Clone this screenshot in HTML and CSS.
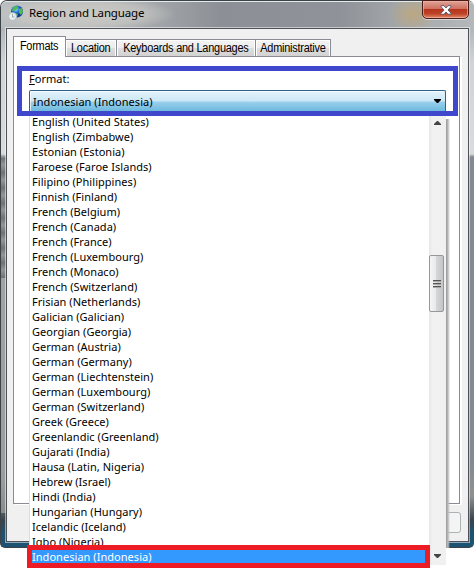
FILE: index.html
```html
<!DOCTYPE html>
<html lang="en">
<head>
<meta charset="utf-8">
<title>Region and Language</title>
<link rel="stylesheet" href="styles.css">
</head>
<body>
<div class="window">
  <header class="titlebar">
    <svg class="globe" width="16" height="16" viewBox="0 0 16 16">
      <defs><radialGradient id="g" cx=".4" cy=".3"><stop offset="0" stop-color="#a9e2ff"/><stop offset=".55" stop-color="#2479d8"/><stop offset="1" stop-color="#123a9a"/></radialGradient></defs>
      <circle cx="9" cy="6.500" r="6" fill="url(#g)"/>
      <path d="M5 2.500Q8 0 10 1.500L9 4 6 6 4 6ZM11 4l3-1 1 4-2 3-2-2ZM7 8l3 1-1 3-2-1Z" fill="#52b848"/>
      <circle cx="4.500" cy="11.500" r="4" fill="#e9eff1" stroke="#a3b3ba" stroke-width=".8"/>
      <path d="M4.500 9v3h2" fill="none" stroke="#8d9a9f" stroke-width=".8"/>
    </svg>
    <h1 class="title">Region and Language</h1>
    <button class="close" aria-label="Close"><svg width="12" height="10" viewBox="0 0 12 10"><path d="M1 .7h3L6 3 8 .7h3v1L8 5l3 3.200v1H8L6 7 4 9.300H1v-1L4 5 1 1.700Z" fill="#fff" stroke="#525667" stroke-width=".9"/></svg></button>
  </header>
  <main class="client">
    <nav class="tabs">
      <a class="tab active"><span>Formats</span></a><a class="tab location"><span>Location</span></a><a class="tab keyboards"><span>Keyboards and Languages</span></a><a class="tab admin"><span>Administrative</span></a>
    </nav>
    <section class="panel">
      <div class="field">
        <label class="label"><u>F</u>ormat:</label>
        <div class="select"><span>Indonesian (Indonesia)</span><svg width="7" height="4"><path d="M0 0h7v1L4 4H3L0 1Z" fill="#000"/></svg></div>
      </div>
    </section>
    <div class="actions"><div class="apply"></div></div>
  </main>
  <div class="dropdown">
    <ul class="list">
      <li>English (United States)</li><li>English (Zimbabwe)</li><li>Estonian (Estonia)</li><li>Faroese (Faroe Islands)</li><li>Filipino (Philippines)</li><li>Finnish (Finland)</li><li>French (Belgium)</li><li>French (Canada)</li><li>French (France)</li><li>French (Luxembourg)</li><li>French (Monaco)</li><li>French (Switzerland)</li><li>Frisian (Netherlands)</li><li>Galician (Galician)</li><li>Georgian (Georgia)</li><li>German (Austria)</li><li>German (Germany)</li><li>German (Liechtenstein)</li><li>German (Luxembourg)</li><li>German (Switzerland)</li><li>Greek (Greece)</li><li>Greenlandic (Greenland)</li><li>Gujarati (India)</li><li>Hausa (Latin, Nigeria)</li><li>Hebrew (Israel)</li><li>Hindi (India)</li><li>Hungarian (Hungary)</li><li>Icelandic (Iceland)</li><li>Igbo (Nigeria)</li>
    </ul>
    <div class="scrollbar">
      <svg class="up" width="7" height="4"><path d="M3 0h1l3 3v1H0V3Z" fill="#444"/></svg>
      <div class="thumb"><i></i><i></i><i></i></div>
      <svg class="down" width="7" height="4"><path d="M0 0h7v1L4 4H3L0 1Z" fill="#444"/></svg>
    </div>
  </div>
  <div class="selected">Indonesian (Indonesia)</div>
</div>
</body>
</html>
```
FILE: styles.css
```css
* { box-sizing: border-box; }
body { margin: 0; width: 474px; height: 568px; overflow: hidden; background: #fff; font: 11px/15px "Noto Sans", sans-serif; color: #000; letter-spacing: 0.04px; }
.window { position: relative; width: 474px; height: 548px; padding: 0 5px 6px 5px; border: solid #3b4248; border-width: 1px 0 1px 1px; border-radius: 7px 7px 5px 5px;
  background:
    repeating-linear-gradient(#6f7271 0, #929594 7px, #6f7271 15px) 0 157px / 5px 120px no-repeat,
    linear-gradient(#a0a3a2, #9a9d9b 200px, #8a8c8a) 0 277px / 5px 235px no-repeat,
    linear-gradient(#b9bcc0 0, #b4b7ba 28px, #d0d2d4 60px, #d9dbdc 153px, #848a92 156px, #848a92 460px, #909090 495px, #39444d 519px, #1d5273 532px, #1d5273); }
.titlebar { display: flex; height: 27px; margin: 0 -5px; padding-left: 7px; align-items: flex-start; border-top: 1px solid #e4e9e9; border-radius: 6px 6px 0 0;
  background: radial-gradient(ellipse 95px 18px at 80px 12px, #cbcac6 0, #cbcac6aa 65%, transparent), radial-gradient(ellipse 24px 18px at 412px 12px, #bba780, transparent), linear-gradient(90deg, #b9bdbf, #a7aaad 140px, #8c9096 220px, #8f9399 340px, #a4a7aa 400px, #b5b8ba); }
.globe { margin-top: 3px; }
.title { margin: 3px 0 0 5px; font-size: 11.5px; line-height: 16px; font-weight: 400; letter-spacing: -0.15px; white-space: nowrap; }
.close { width: 47px; height: 19px; margin: -2px 5px 0 auto; padding: 0; display: flex; align-items: center; justify-content: center; border: 1px solid #4c1d18; border-radius: 0 0 5px 5px; background: linear-gradient(#dfa397, #cf7060 45%, #b7351d 50%, #bd4328 75%, #e58a67); box-shadow: inset 0 0 0 1px #efb5a9aa, 0 1px #d4d7d8; }
.client { height: 514px; padding: 7px 7px 0 6px; border: 1px solid #4e5157; outline: 1px solid #ffffff80; background: #f0f0f0; }
.tabs { display: flex; align-items: flex-end; height: 20px; font: 12px/15px "Liberation Sans", sans-serif; letter-spacing: -0.25px; }
.tab { display: flex; justify-content: center; height: 17px; padding-top: 1px; white-space: nowrap; border: 1px solid #898c95; border-width: 1px 1px 0 0; background: linear-gradient(#f3f3f3, #ececec 50%, #dedede 51%, #d2d2d2); box-shadow: inset 1px 1px #fff, inset -1px 0 #fff; }
.tab span { flex: none; transform: scaleX(.91); }
.tab.active { width: 53px; height: 21px; margin-bottom: -1px; padding-top: 2px; border-left-width: 1px; background: #fff; z-index: 1; }
.location { width: 51px; }
.keyboards { width: 139px; }
.admin { width: 75px; }
.panel { width: 447px; height: 448px; padding: 9px 0 0 3px; border: 1px solid #898c95; background: #fff; box-shadow: 2px 1px #fff; }
.field { position: relative; z-index: 4; width: 441px; height: 50px; border: 5px solid #3f48cc; padding: 0 7px; }
.label { display: block; }
.select { display: flex; justify-content: space-between; align-items: center; width: 417px; height: 21px; margin-top: 4px; padding: 0 4px 0 3px; border: 1px solid #2c628b; border-bottom: 0; border-radius: 2px 2px 0 0; background: linear-gradient(#e3f2fa, #cbe7f6 52%, #9bd1ed 53%, #6db9de); box-shadow: inset 1px 1px #ffffffaa; }
.actions { display: flex; justify-content: flex-end; margin-top: 8px; }
.apply { width: 60px; height: 21px; border: 1px solid #adb2b5; border-radius: 3px; background: #f4f4f4; }
.dropdown { position: absolute; z-index: 2; left: 28px; top: 113px; width: 417px; height: 451px; display: flex; background: #fff; border-left: 1px solid #ddd; }
/* The shadow falls on the dialog only, not below its frame. */
.dropdown::after { content: ""; position: absolute; left: 100%; top: 5px; width: 4px; height: 429px; background: linear-gradient(90deg, #999, #bbb 50%, #eee0); }
.list { list-style: none; width: 400px; margin: 0; padding: 0 0 0 2px; }
.list li { height: 15px; white-space: nowrap; }
.scrollbar { position: relative; width: 17px; padding: 7px 1px 7px 0; display: flex; flex-direction: column; justify-content: space-between; align-items: center; background: linear-gradient(90deg, #e7e7e7, #f1f1f1 20%, #f0f0f0); }
.thumb { position: absolute; top: 141px; left: 0; width: 15px; height: 57px; display: flex; flex-direction: column; align-items: center; justify-content: center; gap: 1px; border: 1px solid #979797; border-radius: 2px; background: linear-gradient(90deg, #f5f5f5, #e9e9e9 45%, #d4d6d7 50%, #c3c5c7); }
.thumb i { width: 8px; height: 2px; background: #555; border-bottom: 1px solid #aaa; }
.selected { position: absolute; z-index: 3; left: 26px; top: 544px; width: 403px; height: 23px; border: 5px solid #ed1c24; background: #39f; color: #fff; line-height: 14px; white-space: nowrap; }
```
